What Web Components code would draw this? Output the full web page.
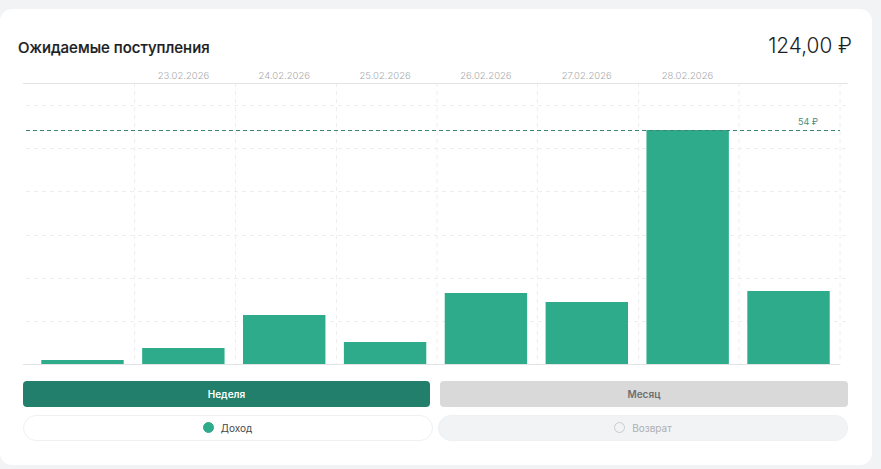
<!DOCTYPE html>
<html lang="ru">
<head>
<meta charset="utf-8">
<title>Ожидаемые поступления</title>
<style>
  html, body { margin: 0; height: 100%; background: #f1f3f5; overflow: hidden; }
  body { font-family: Inter, "Noto Sans", sans-serif; padding-top: 9px; box-sizing: border-box; }
</style>
</head>
<body>
<income-card>
  <card-header slot="header" amount="124,00 ₽">Ожидаемые поступления</card-header>
  <bar-chart slot="chart"></bar-chart>
  <period-button slot="periods" active>Неделя</period-button>
  <period-button slot="periods">Месяц</period-button>
  <legend-pill slot="legend" checked>Доход</legend-pill>
  <legend-pill slot="legend">Возврат</legend-pill>
</income-card>

<script>
'use strict';

class IncomeCard extends HTMLElement {
  constructor() {
    super();
    this.attachShadow({ mode: 'open' }).innerHTML = `
      <style>
        :host {
          display: block;
          width: 872px;
          height: 456px;
          box-sizing: border-box;
          background: #fff;
          border-radius: 12px;
          padding: 24px 20px 0 18px;
        }
        .chart { margin: 0 0 0 5px; }
        .periods {
          display: grid;
          grid-template-columns: 407px 408px;
          gap: 10px;
          margin: 16px 0 0 5px;
        }
        .legend {
          display: grid;
          grid-template-columns: 410px 410px;
          gap: 5px;
          margin: 8px 0 0 5px;
        }
      </style>
      <slot name="header"></slot>
      <div class="chart"><slot name="chart"></slot></div>
      <div class="periods"><slot name="periods"></slot></div>
      <div class="legend"><slot name="legend"></slot></div>
    `;
  }
}

class CardHeader extends HTMLElement {
  constructor() {
    super();
    this.attachShadow({ mode: 'open' }).innerHTML = `
      <style>
        :host {
          display: flex;
          justify-content: space-between;
          align-items: flex-start;
          height: 35px;
          color: #1b1d1f;
        }
        .title { font-size: 15px; font-weight: 500; line-height: 17px; margin-top: 6px; -webkit-text-stroke: .2px #1b1d1f; }
        .amount { font-size: 20.8px; font-weight: 300; line-height: 26px; }
      </style>
      <div class="title"><slot></slot></div>
      <div class="amount"></div>
    `;
  }

  connectedCallback() {
    this.shadowRoot.querySelector('.amount').textContent = this.getAttribute('amount');
  }
}

class BarChart extends HTMLElement {
  constructor() {
    super();
    this.attachShadow({ mode: 'open' });
  }

  connectedCallback() {
    // offsets are from the chart's top left (23, 68 on the page)
    const top = 15, bottom = 296;
    const cols = [111.5, 212.5, 313.5, 414, 514.5, 615.5, 716, 817];
    const rows = [37, 80, 123, 167, 210, 253];
    const dates = ['23.02.2026', '24.02.2026', '25.02.2026', '26.02.2026', '27.02.2026', '28.02.2026'];
    const tops = [292, 280, 247, 274, 225, 234, 62, 223];

    const v = cols.map(x => `<line class="grid" x1="${x}" x2="${x}" y1="${top}" y2="${bottom}"/>`).join('');
    const h = rows.map(y => `<line class="grid" x1="3" x2="825" y1="${y + .5}" y2="${y + .5}"/>`).join('');
    const b = tops.map((y, i) => `<rect x="${18.3 + i * 100.86}" y="${y}" width="82.4" height="${bottom - y}" fill="#2eab8a"/>`).join('');
    const t = dates.map((d, i) => `<text class="date" x="${160.5 + i * 100.8}" y="11" text-anchor="middle">${d}</text>`).join('');

    this.shadowRoot.innerHTML = `
      <style>
        :host { display: block; height: 297px; }
        svg { display: block; overflow: visible; }
        .grid { stroke: #eceef0; stroke-width: 1; stroke-dasharray: 4 4; }
        .axis { stroke: #e3e4e6; stroke-width: 1; }
        .limit { stroke: #3d8573; stroke-width: 1; stroke-dasharray: 4 3; }
        text { font-family: Inter, "Noto Sans", sans-serif; font-size: 9.5px; }
        .date { fill: #a8aaad; font-weight: 300; }
        .max { fill: #4d8b7a; font-size: 9px; }
      </style>
      <svg width="825" height="297" viewBox="0 0 825 297">
        ${v}${h}
        <line class="axis" x1="0" x2="825" y1="${top + .5}" y2="${top + .5}"/>
        ${t}
        ${b}
        <line class="limit" x1="3" x2="817" y1="62.5" y2="62.5"/>
        <text class="max" x="775" y="57">54 ₽</text>
        <line class="axis" x1="0" x2="817" y1="${bottom + .5}" y2="${bottom + .5}"/>
      </svg>
    `;
  }
}

class PeriodButton extends HTMLElement {
  constructor() {
    super();
    this.attachShadow({ mode: 'open' }).innerHTML = `
      <style>
        :host {
          display: flex;
          align-items: center;
          justify-content: center;
          height: 26px;
          border-radius: 4px;
          font-size: 10px;
          font-weight: 600;
          background: #d9d9d9;
          color: #6d6e70;
        }
        :host([active]) { background: #217f6b; color: #fff; }
      </style>
      <slot></slot>
    `;
  }
}

class LegendPill extends HTMLElement {
  constructor() {
    super();
    this.attachShadow({ mode: 'open' }).innerHTML = `
      <style>
        :host {
          display: flex;
          align-items: center;
          justify-content: center;
          gap: 7px;
          height: 26px;
          box-sizing: border-box;
          border: 1px solid #eef0f2;
          border-radius: 13px;
          padding-bottom: 1px;
          font-size: 10px;
          background: #f1f3f5;
          color: #aeb0b3;
        }
        :host([checked]) { background: #fff; color: #46484a; padding-right: 1px; }
        .dot {
          width: 11px;
          height: 11px;
          box-sizing: border-box;
          border-radius: 50%;
          border: 1px solid #c9cbcd;
        }
        :host([checked]) .dot { background: #2eab8a; border-color: #2eab8a; }
      </style>
      <span class="dot"></span>
      <slot></slot>
    `;
  }
}

customElements.define('income-card', IncomeCard);
customElements.define('card-header', CardHeader);
customElements.define('bar-chart', BarChart);
customElements.define('period-button', PeriodButton);
customElements.define('legend-pill', LegendPill);
</script>
</body>
</html>
